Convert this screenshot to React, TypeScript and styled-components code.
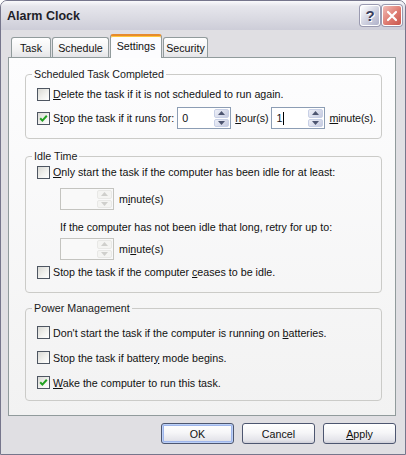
import React from 'react';
import styled, { createGlobalStyle, css } from 'styled-components';

const GlobalStyle = createGlobalStyle`
  html, body {
    margin: 0;
    padding: 0;
    background: #ffffff;
  }
  body {
    font-family: "Liberation Sans", Arial, sans-serif;
    font-size: 10.7px;
    color: #111;
  }
  * {
    box-sizing: border-box;
  }
`;

const Window = styled.div`
  width: 406px;
  height: 455px;
  display: flex;
  flex-direction: column;
  background: #e0dfe3;
  border: 1px solid #76768c;
  border-radius: 7px 7px 0 0;
  overflow: hidden;
`;

const TitleBar = styled.div`
  flex: none;
  height: 29px;
  display: flex;
  align-items: center;
  gap: 2px;
  padding: 0 3px 0 6px;
  background: linear-gradient(#fafafc 0%, #e6e6ec 18%, #dadae2 60%, #cdcdd8 100%);
`;

const Title = styled.div`
  flex: 1;
  font-size: 12.5px;
  font-weight: bold;
  color: #1e1e28;
  padding-top: 1px;
`;

const CaptionButton = styled.div<{ $close?: boolean }>`
  width: 20px;
  height: 21px;
  border-radius: 3px;
  border: 1px solid #ffffff;
  box-shadow: 0 0 0 1px #9a9ab0;
  display: flex;
  align-items: center;
  justify-content: center;
  font-size: 15px;
  font-weight: bold;
  color: #3b3e5c;
  text-shadow: 1px 1px 0 #ffffff;
  background: ${(p) =>
    p.$close
      ? 'linear-gradient(135deg, #f2bdb8 0%, #de7a70 55%, #c9574e 100%)'
      : 'linear-gradient(135deg, #ffffff 0%, #cfd1e0 55%, #afb1c9 100%)'};
`;

const Body = styled.div`
  flex: 1;
  min-height: 0;
  display: flex;
  flex-direction: column;
  padding: 4px 9px 0 7px;
`;

const TabStrip = styled.div`
  flex: none;
  height: 23px;
  display: flex;
  align-items: flex-end;
  gap: 1px;
  padding-left: 3px;
`;

const Tab = styled.div<{ $active?: boolean; $w: number }>`
  width: ${(p) => p.$w}px;
  height: 20px;
  display: flex;
  align-items: center;
  justify-content: center;
  border: 1px solid #919b9c;
  border-bottom: none;
  border-radius: 3px 3px 0 0;
  background: linear-gradient(#ffffff, #f3f3f3 60%, #e4e4e8);
  ${(p) =>
    p.$active &&
    css`
      position: relative;
      z-index: 1;
      height: 24px;
      margin-bottom: -1px;
      padding-bottom: 3px;
      border-top: 2px solid #e68b2c;
      box-shadow: inset 0 1px 0 #ffc83c;
      background: #fcfcfe;
    `}
`;

const Panel = styled.div`
  flex: 1;
  display: flex;
  flex-direction: column;
  border: 1px solid #919b9c;
  background: linear-gradient(#fdfdfe, #f2f2f2);
  padding: 10px 13px 0 16px;
`;

const Group = styled.fieldset<{ $top?: number }>`
  margin: ${(p) => p.$top ?? 0}px 0 0 0;
  padding: 0;
  min-width: 0;
  border: 1px solid #cbcbc8;
  border-radius: 4px;
`;

const Legend = styled.legend`
  margin-left: 6px;
  padding: 0 2px;
  line-height: 13px;
  color: #1a1a1a;
`;

const GroupBody = styled.div<{ $pad: string }>`
  display: flex;
  flex-direction: column;
  padding: ${(p) => p.$pad};
`;

const CheckRow = styled.div<{ $h: number; $mt?: number }>`
  height: ${(p) => p.$h}px;
  margin-top: ${(p) => p.$mt ?? 0}px;
  display: flex;
  align-items: center;
  gap: 3px;
  white-space: nowrap;
`;

const Box = styled.span`
  flex: none;
  width: 13px;
  height: 13px;
  border: 1px solid #4e5662;
  background: linear-gradient(135deg, #d9d9d4 0%, #f1f1ee 55%, #ffffff 100%);
  display: inline-flex;
`;

const Unit = styled.span<{ $l?: number; $r?: number }>`
  margin-left: ${(p) => p.$l ?? 0}px;
  margin-right: ${(p) => p.$r ?? 0}px;
  letter-spacing: -0.1px;
  white-space: nowrap;
`;

const SpinLine = styled.div<{ $mt: number }>`
  margin: ${(p) => p.$mt}px 0 0 23px;
  display: flex;
  align-items: center;
  gap: 5px;
`;

const Note = styled.div<{ $mt: number }>`
  margin: ${(p) => p.$mt}px 0 0 23px;
  line-height: 13px;
  white-space: nowrap;
`;

const SpinBox = styled.div<{ $disabled?: boolean }>`
  flex: none;
  width: 54px;
  height: 22px;
  display: flex;
  align-items: center;
  padding: 1px;
  border: 1px solid ${(p) => (p.$disabled ? '#c4c4c0' : '#8c9db4')};
  background: ${(p) => (p.$disabled ? '#f9f9f9' : '#ffffff')};
`;

const SpinValue = styled.div`
  flex: 1;
  display: flex;
  align-items: center;
  padding-left: 3px;
`;

const Caret = styled.span`
  width: 1px;
  height: 13px;
  margin-left: 1px;
  background: #000;
`;

const SpinButtons = styled.div`
  flex: none;
  width: 15px;
  height: 100%;
  display: flex;
  flex-direction: column;
  gap: 1px;
`;

const SpinArrow = styled.div<{ $disabled?: boolean }>`
  flex: 1;
  display: flex;
  align-items: center;
  justify-content: center;
  border-radius: 2px;
  ${(p) =>
    p.$disabled
      ? css`
          border: 1px solid #e8e8e6;
          background: #f4f4f2;
          color: #cfcfcc;
        `
      : css`
          border: 1px solid #c8d0e6;
          background: linear-gradient(135deg, #eef0f8, #c6cbe0);
          color: #4d5570;
        `}
`;

const ButtonRow = styled.div`
  flex: none;
  display: flex;
  justify-content: flex-end;
  gap: 8px;
  padding: 7px 0 10px;
`;

const Button = styled.div<{ $default?: boolean }>`
  width: 73px;
  height: 21px;
  display: flex;
  align-items: center;
  justify-content: center;
  border: 1px solid #4d5670;
  border-radius: 3px;
  background: linear-gradient(#ffffff 0%, #f6f6f8 45%, #e4e4ea 85%, #cfcfd8 100%);
  ${(p) =>
    p.$default &&
    css`
      box-shadow: inset 0 0 0 1px #bcd0f6, inset 0 0 0 2px #9fb6ec;
    `}
`;

const Arrow = ({ up }: { up?: boolean }) => (
  <svg width="7" height="4" viewBox="0 0 7 4">
    <path d={up ? 'M0 4 L3.5 0 L7 4 Z' : 'M0 0 L3.5 4 L7 0 Z'} fill="currentColor" />
  </svg>
);

const Spinner = ({ value, caret, disabled }: { value?: string; caret?: boolean; disabled?: boolean }) => (
  <SpinBox $disabled={disabled}>
    <SpinValue>
      {value}
      {caret && <Caret />}
    </SpinValue>
    <SpinButtons>
      <SpinArrow $disabled={disabled}>
        <Arrow up />
      </SpinArrow>
      <SpinArrow $disabled={disabled}>
        <Arrow />
      </SpinArrow>
    </SpinButtons>
  </SpinBox>
);

const Check = ({ checked }: { checked?: boolean }) => (
  <Box>
    {checked && (
      <svg width="11" height="11" viewBox="0 0 11 11">
        <polyline points="2.2,5.2 4.4,7.6 8.8,2.8" fill="none" stroke="#21a121" strokeWidth="2" />
      </svg>
    )}
  </Box>
);

const App = () => (
  <>
    <GlobalStyle />
    <Window>
      <TitleBar>
        <Title>Alarm Clock</Title>
        <CaptionButton>?</CaptionButton>
        <CaptionButton $close>
          <svg width="12" height="12" viewBox="0 0 12 12">
            <path d="M2 2 L10 10 M10 2 L2 10" stroke="#ffffff" strokeWidth="2.2" strokeLinecap="round" />
          </svg>
        </CaptionButton>
      </TitleBar>
      <Body>
        <TabStrip>
          <Tab $w={40}>Task</Tab>
          <Tab $w={57}>Schedule</Tab>
          <Tab $w={52} $active>
            Settings
          </Tab>
          <Tab $w={45}>Security</Tab>
        </TabStrip>
        <Panel>
          <Group>
            <Legend>Scheduled Task Completed</Legend>
            <GroupBody $pad="2px 0 7px 11px">
              <CheckRow $h={22}>
                <Check />
                <span>
                  <u>D</u>elete the task if it is not scheduled to run again.
                </span>
              </CheckRow>
              <CheckRow $h={26}>
                <Check checked />
                <span>
                  S<u>t</u>op the task if it runs for:
                </span>
                <Spinner value="0" />
                <Unit $l={1}>
                  <u>h</u>our(s)
                </Unit>
                <Spinner value="1" caret />
                <Unit $l={1}>
                  <u>m</u>inute(s).
                </Unit>
              </CheckRow>
            </GroupBody>
          </Group>

          <Group $top={11}>
            <Legend>Idle Time</Legend>
            <GroupBody $pad="0 0 11px 11px">
              <CheckRow $h={18}>
                <Check />
                <span>
                  <u>O</u>nly start the task if the computer has been idle for at least:
                </span>
              </CheckRow>
              <SpinLine $mt={7}>
                <Spinner disabled />
                <span>
                  m<u>i</u>nute(s)
                </span>
              </SpinLine>
              <Note $mt={11}>If the computer has not been idle that long, retry for up to:</Note>
              <SpinLine $mt={4}>
                <Spinner disabled />
                <span>
                  mi<u>n</u>ute(s)
                </span>
              </SpinLine>
              <CheckRow $h={18} $mt={3}>
                <Check />
                <span>
                  Stop the task if the computer <u>c</u>eases to be idle.
                </span>
              </CheckRow>
            </GroupBody>
          </Group>

          <Group $top={9}>
            <Legend>Power Management</Legend>
            <GroupBody $pad="5px 0 5px 11px">
              <CheckRow $h={25}>
                <Check />
                <span>
                  Don't start the task if the computer is running on <u>b</u>atteries.
                </span>
              </CheckRow>
              <CheckRow $h={25}>
                <Check />
                <span>
                  Stop the task if batter<u>y</u> mode begins.
                </span>
              </CheckRow>
              <CheckRow $h={25}>
                <Check checked />
                <span>
                  <u>W</u>ake the computer to run this task.
                </span>
              </CheckRow>
            </GroupBody>
          </Group>
        </Panel>
        <ButtonRow>
          <Button $default>OK</Button>
          <Button>Cancel</Button>
          <Button>
            <span>
              <u>A</u>pply
            </span>
          </Button>
        </ButtonRow>
      </Body>
    </Window>
  </>
);

export default App;
